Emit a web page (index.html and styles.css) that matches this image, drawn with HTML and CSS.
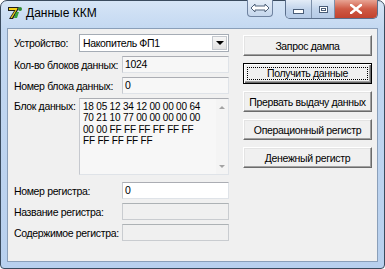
FILE: index.html
```html
<!DOCTYPE html>
<html lang="ru">
<head>
    <meta charset="UTF-8">
    <title>Данные ККМ</title>
    <link rel="stylesheet" href="styles.css">
</head>
<body>

<div class="window">
    <div class="titlebar">
        <svg class="app-icon" width="16" height="16" viewBox="0 0 16 16">
            <polygon points="1,2 12,2 11,5 6,14 2,14 7,6 1,6" fill="#1e1e1e"/>
            <polygon points="2,3 10.5,3 10,4.5 5,13 3.5,13 8.5,5 2,5" fill="#f2d21b"/>
            <polygon points="9,7 12,7 10,13 7,13" fill="#3aa53a"/>
            <circle cx="13" cy="4" r="2" fill="#2d8a2d"/>
        </svg>
        <span class="title">Данные ККМ</span>
        <div class="caption-extra">
            <svg width="18" height="8" viewBox="0 0 18 8">
                <polygon points="0,4 4,0 4,2 14,2 14,0 18,4 14,8 14,6 4,6 4,8" fill="#fff" stroke="#50627a" stroke-width="1"/>
            </svg>
        </div>
        <div class="caption-buttons">
            <span class="cb cb-min"><i></i></span>
            <span class="cb cb-max"><i></i></span>
            <span class="cb cb-close">
                <svg width="12" height="10" viewBox="0 0 12 10">
                    <path d="M1,1 L11,9 M11,1 L1,9" stroke="#fff" stroke-width="2.6" stroke-linecap="square"/>
                </svg>
            </span>
        </div>
    </div>

    <div class="client">
        <div class="form">
            <div class="row">
                <label class="lbl-short">Устройство:</label>
                <div class="combo">
                    <span class="combo-text">Накопитель ФП1</span>
                    <span class="combo-btn"></span>
                </div>
            </div>
            <div class="row row-tb">
                <label class="lbl-long">Кол-во блоков данных:</label>
                <div class="textbox">1024</div>
            </div>
            <div class="row row-tb">
                <label class="lbl-long">Номер блока данных:</label>
                <div class="textbox">0</div>
            </div>
            <div class="row row-block">
                <label class="lbl-short lbl-top">Блок данных:</label>
                <div class="memo">
                    <div class="memo-text">18 05 12 34 12 00 00 00 64<br>70 21 10 77 00 00 00 00 00<br>00 00 FF FF FF FF FF FF<br>FF FF FF FF FF</div>
                    <div class="memo-scroll">
                        <span class="arrow-up"></span>
                        <span class="arrow-down"></span>
                    </div>
                </div>
            </div>
            <div class="row row-reg">
                <label class="lbl-long">Номер регистра:</label>
                <div class="textbox textbox-white">0</div>
            </div>
            <div class="row row-tb">
                <label class="lbl-long">Название регистра:</label>
                <div class="textbox textbox-disabled"></div>
            </div>
            <div class="row row-tb">
                <label class="lbl-long">Содержимое регистра:</label>
                <div class="textbox textbox-disabled"></div>
            </div>
        </div>

        <div class="actions">
            <button class="btn">Запрос дампа</button>
            <button class="btn btn-default"><span class="focus">Получить данные</span></button>
            <button class="btn">Прервать выдачу данных</button>
            <button class="btn">Операционный регистр</button>
            <button class="btn">Денежный регистр</button>
        </div>
    </div>
</div>

</body>
</html>
```

FILE: styles.css
```css
body {
    margin: 0;
    font-family: "Liberation Sans", Tahoma, sans-serif;
    font-size: 10.5px;
    letter-spacing: -0.35px;
    color: #000;
    background: #fff;
}

.window {
    width: 385px;
    height: 269px;
    box-sizing: border-box;
    border: 1px solid #3a4b5e;
    border-radius: 7px 7px 4px 4px;
    background: linear-gradient(#d6e5f6, #c3d8f1 28px, #b8d0ee);
    padding: 0 6px 6px;
    display: flex;
    flex-direction: column;
}

/* title bar */

.titlebar {
    height: 27px;
    display: flex;
    align-items: flex-start;
}

.app-icon {
    margin: 4px 0 0 0;
}

.title {
    margin: 5px 0 0 3px;
    font-size: 12px;
    letter-spacing: 0;
    line-height: 15px;
}

.caption-extra {
    margin: -1px 0 0 auto;
    width: 26px;
    height: 17px;
    box-sizing: border-box;
    border: 1px solid #6f83a0;
    border-top: none;
    border-radius: 0 0 4px 4px;
    background: linear-gradient(#e6eef8, #c5d6ec);
    display: flex;
    align-items: center;
    justify-content: center;
}

.caption-buttons {
    margin: -1px 0 0 12px;
    display: flex;
    height: 18px;
    border: 1px solid #5b6f8c;
    border-top: none;
    border-radius: 0 0 5px 5px;
    overflow: hidden;
}

.cb {
    height: 100%;
    display: flex;
    align-items: center;
    justify-content: center;
    background: linear-gradient(#e3ecf7, #c2d4eb 50%, #b5cae6);
    border-right: 1px solid #7d90aa;
}

.cb-min { width: 25px; }
.cb-max { width: 22px; }

.cb-min i {
    display: block;
    width: 9px;
    height: 3px;
    margin-top: 5px;
    background: #fff;
    border: 1px solid #4a5d78;
}

.cb-max i {
    display: block;
    width: 7px;
    height: 5px;
    border: 1px solid #4a5d78;
    box-shadow: inset 0 0 0 1px #fff, inset 0 0 0 2px #4a5d78;
    background: #fff;
}

.cb-close {
    width: 42px;
    border-right: none;
    background: linear-gradient(#e8a494, #cf5a45 50%, #c2432f);
}

/* client area */

.client {
    flex: 1;
    background: #f0f0f0;
    border: 1px solid #8a9fb9;
    display: flex;
    padding: 5px 4px 0 6px;
}

.form {
    width: 215px;
    flex-shrink: 0;
    display: flex;
    flex-direction: column;
}

.row {
    display: flex;
    align-items: center;
}

.row-tb { margin-top: 4px; }
.row-block { margin-top: 4px; align-items: flex-start; }
.row-reg { margin-top: 7px; }

label {
    white-space: nowrap;
    flex-shrink: 0;
}

.lbl-short { width: 65px; }
.lbl-long { width: 108px; }
.lbl-top { padding-top: 2px; }

.combo {
    width: 150px;
    height: 18px;
    flex-shrink: 0;
    box-sizing: border-box;
    border: 1px solid #a5acb5;
    background: #fff;
    display: flex;
    align-items: center;
}

.combo-text {
    flex: 1;
    padding-left: 3px;
}

.combo-btn {
    width: 15px;
    height: 14px;
    margin-right: 1px;
    box-sizing: border-box;
    border: 1px solid #c4c8ce;
    background: linear-gradient(#f6f6f6, #e2e2e2);
    position: relative;
}

.combo-btn::after {
    content: "";
    position: absolute;
    left: 3px;
    top: 4px;
    border-left: 4px solid transparent;
    border-right: 4px solid transparent;
    border-top: 4px solid #000;
}

.textbox {
    width: 107px;
    height: 17px;
    flex-shrink: 0;
    box-sizing: border-box;
    border: 1px solid #dfe3e8;
    border-top-color: #abadb3;
    border-left-color: #c6c9cf;
    background: #f7f7f7;
    padding-left: 2px;
    line-height: 15px;
}

.textbox-white {
    background: #fff;
}

.textbox-disabled {
    background: #f0f0f0;
    border-color: #c9ccd0;
    border-top-color: #adb2b5;
}

.memo {
    width: 150px;
    height: 77px;
    flex-shrink: 0;
    box-sizing: border-box;
    border: 1px solid #dfe3e8;
    border-top-color: #abadb3;
    border-left-color: #c6c9cf;
    background: #f7f7f7;
    display: flex;
}

.memo-text {
    flex: 1;
    padding: 2px 0 0 3px;
    font-size: 10px;
    letter-spacing: -0.2px;
    line-height: 11.4px;
    white-space: nowrap;
}

.memo-scroll {
    width: 12px;
    display: flex;
    flex-direction: column;
    justify-content: space-between;
    align-items: center;
    padding: 7px 0 6px;
    background: #f4f4f4;
}

.arrow-up {
    border-left: 3px solid transparent;
    border-right: 3px solid transparent;
    border-bottom: 3px solid #a3a3a3;
}

.arrow-down {
    border-left: 3px solid transparent;
    border-right: 3px solid transparent;
    border-top: 3px solid #a3a3a3;
}

/* buttons */

.actions {
    margin-left: 14px;
    padding-top: 1px;
    display: flex;
    flex-direction: column;
    gap: 7px;
}

.btn {
    width: 129px;
    height: 21px;
    padding: 0;
    font-family: inherit;
    font-size: 10.5px;
    letter-spacing: -0.35px;
    white-space: nowrap;
    color: #000;
    background: #f0f0f0;
    border: 1px solid;
    border-color: #fff #6b6b6b #6b6b6b #fff;
    box-shadow: inset -1px -1px 0 #a0a0a0, inset 1px 1px 0 #e3e3e3;
}

.btn-default {
    border: 1px solid #000;
    box-shadow: inset 1px 1px 0 #fff, inset -1px -1px 0 #6b6b6b, inset -2px -2px 0 #a0a0a0;
    display: flex;
    padding: 3px;
}

.focus {
    flex: 1;
    border: 1px dotted #000;
    line-height: 11px;
}
```
